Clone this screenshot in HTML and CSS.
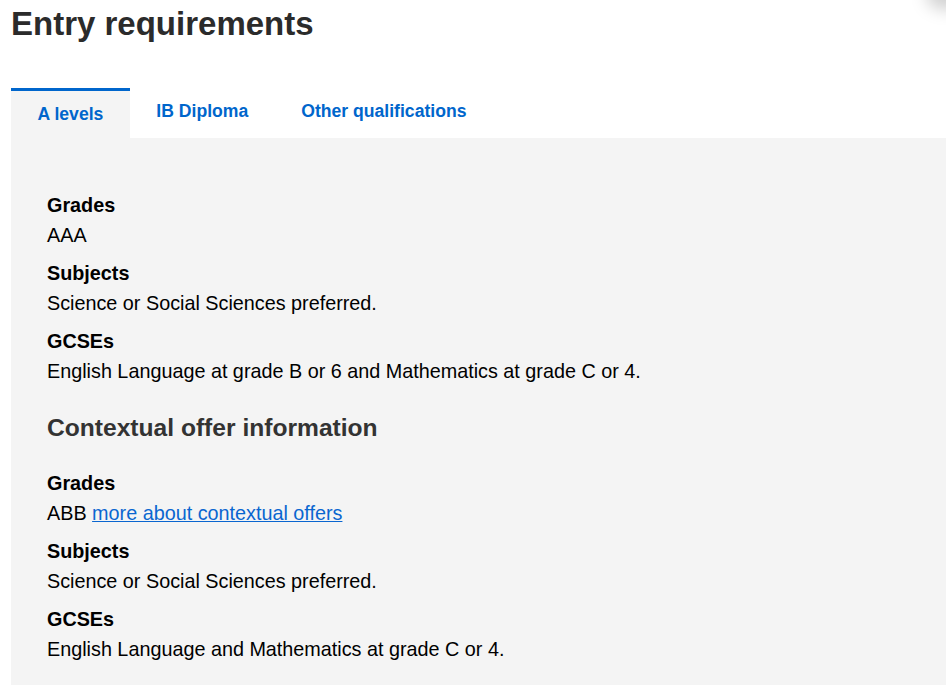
FILE: index.html
```html
<!DOCTYPE html>
<html lang="en">
<head>
<meta charset="utf-8">
<title>Entry requirements</title>
<link rel="stylesheet" href="styles.css">
</head>
<body>
<div class="corner-shadow" aria-hidden="true"></div>
<main class="page">
  <h1 class="title">Entry requirements</h1>
  <div class="tabs" role="tablist">
    <a class="tab tab-active" role="tab" href="#">A levels</a>
    <a class="tab" role="tab" href="#">IB Diploma</a>
    <a class="tab" role="tab" href="#">Other qualifications</a>
  </div>
  <section class="panel">
    <dl class="reqs">
      <dt>Grades</dt>
      <dd>AAA</dd>
      <dt>Subjects</dt>
      <dd>Science or Social Sciences preferred.</dd>
      <dt>GCSEs</dt>
      <dd>English Language at grade B or 6 and Mathematics at grade C or 4.</dd>
    </dl>
    <h2 class="subhead">Contextual offer information</h2>
    <dl class="reqs">
      <dt>Grades</dt>
      <dd>ABB <a class="link" href="#">more about contextual offers</a></dd>
      <dt>Subjects</dt>
      <dd>Science or Social Sciences preferred.</dd>
      <dt>GCSEs</dt>
      <dd>English Language and Mathematics at grade C or 4.</dd>
    </dl>
  </section>
</main>
</body>
</html>
```
FILE: styles.css
```css
html, body {
  margin: 0;
  padding: 0;
  background: #ffffff;
}
body {
  font-family: "Liberation Sans", Arial, sans-serif;
  color: #000000;
  overflow: hidden;
}
.page {
  padding-left: 11px;
}
.title {
  margin: 0;
  padding-top: 4px;
  font-size: 33px;
  line-height: 40px;
  font-weight: 700;
  color: #2b2b2b;
}
.tabs {
  display: flex;
  align-items: flex-start;
  margin-top: 44px;
}
.tab {
  display: block;
  padding: 12px 26.5px 13px;
  border-top: 3px solid transparent;
  font-size: 17.6px;
  line-height: 22px;
  font-weight: 700;
  color: #0066cc;
  text-decoration: none;
}
.tab + .tab {
  border-top: 0;
}
.tab-active {
  border-top-color: #0066cc;
  background: #f4f4f4;
}
.panel {
  background: #f4f4f4;
  padding: 52px 35px 20px 36px;
  min-height: 520px;
}
.reqs {
  margin: 0;
  font-size: 19.8px;
  line-height: 30px;
}
.reqs dt {
  font-weight: 700;
  margin: 0;
}
.reqs dd {
  margin: 0 0 8px 0;
}
.subhead {
  margin: 27px 0 25px;
  font-size: 24.6px;
  line-height: 30px;
  font-weight: 700;
  color: #333333;
}
.link {
  color: #0a66d0;
  text-decoration: underline;
}
.corner-shadow {
  position: fixed;
  top: -20px;
  right: -20px;
  width: 40px;
  height: 30px;
  border-radius: 50%;
  background: rgba(0, 0, 0, 0.18);
  filter: blur(8px);
  pointer-events: none;
}
```
